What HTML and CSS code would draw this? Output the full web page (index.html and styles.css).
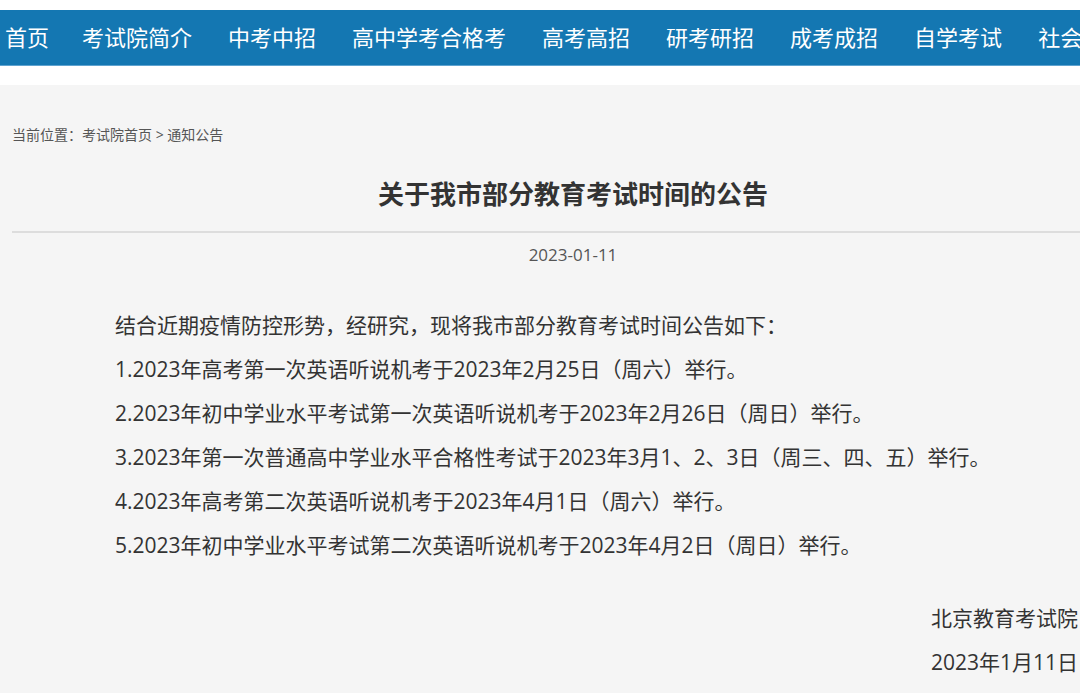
FILE: index.html
```html
<!DOCTYPE html>
<html lang="zh-CN">
<head>
<meta charset="UTF-8">
<meta name="viewport" content="width=device-width, initial-scale=1.0">
<title>关于我市部分教育考试时间的公告</title>
<link rel="stylesheet" href="styles.css">
</head>
<body>

<!-- 顶部导航 -->
<div class="nav">
    <a href="#">首页</a>
    <a href="#">考试院简介</a>
    <a href="#">中考中招</a>
    <a href="#">高中学考合格考</a>
    <a href="#">高考高招</a>
    <a href="#">研考研招</a>
    <a href="#">成考成招</a>
    <a href="#">自学考试</a>
    <a href="#">社会考试</a>
</div>

<div class="main">
    <div class="crumb">当前位置：<a href="#">考试院首页</a> &gt; <a href="#">通知公告</a></div>

    <h1 class="title">关于我市部分教育考试时间的公告</h1>
    <div class="date">2023-01-11</div>

    <div class="article">
        <p>结合近期疫情防控形势，经研究，现将我市部分教育考试时间公告如下：</p>
        <p>1.2023年高考第一次英语听说机考于2023年2月25日（周六）举行。</p>
        <p>2.2023年初中学业水平考试第一次英语听说机考于2023年2月26日（周日）举行。</p>
        <p>3.2023年第一次普通高中学业水平合格性考试于2023年3月1、2、3日（周三、四、五）举行。</p>
        <p>4.2023年高考第二次英语听说机考于2023年4月1日（周六）举行。</p>
        <p>5.2023年初中学业水平考试第二次英语听说机考于2023年4月2日（周日）举行。</p>
        <p class="sign">北京教育考试院</p>
        <p class="sign">2023年1月11日</p>
    </div>
</div>

</body>
</html>
```

FILE: styles.css
```css
/* 基本スタイル */
html {
    overflow-x: hidden;
}
body {
    margin: 0;
    padding: 0;
    background-color: #fff;
    font-family: "Open Sans", "Noto Sans CJK SC", sans-serif;
    color: #333;
}
a {
    color: inherit;
    text-decoration: none;
}

/* ナビ */
.nav {
    margin-top: 10px;
    height: 55px;
    background-color: #1477b2;
    border-bottom: 1px solid #5fa3d0;
    white-space: nowrap;
    overflow: hidden;
    display: flex;
    align-items: center;
    padding-left: 5px;
}
.nav a {
    color: #fff;
    font-size: 22px;
    margin-right: 36px;
    line-height: 55px;
}
.nav a:first-child {
    margin-right: 33px;
}

/* 本文 */
.main {
    margin-top: 19px;
    background-color: #f5f5f5;
    width: 1122px;
    padding: 0 0 40px 12px;
}
.crumb {
    padding-top: 40px;
    font-size: 14px;
    color: #555;
    line-height: 20px;
}
.title {
    margin: 32px 0 0;
    text-align: center;
    font-size: 26px;
    font-weight: bold;
    color: #333;
    line-height: 34px;
    padding-bottom: 20px;
    border-bottom: 2px solid #ddd;
}
.date {
    text-align: center;
    font-size: 17px;
    color: #555;
    margin-top: 10px;
    line-height: 24px;
}
.article {
    margin-top: 36px;
    padding-left: 103px;
    padding-right: 56px;
}
.article p {
    margin: 0;
    font-size: 21px;
    line-height: 44px;
}
.article .sign {
    text-align: right;
}
.article p + .sign {
    margin-top: 29px;
}
.article .sign + .sign {
    margin-top: 0;
}
```
